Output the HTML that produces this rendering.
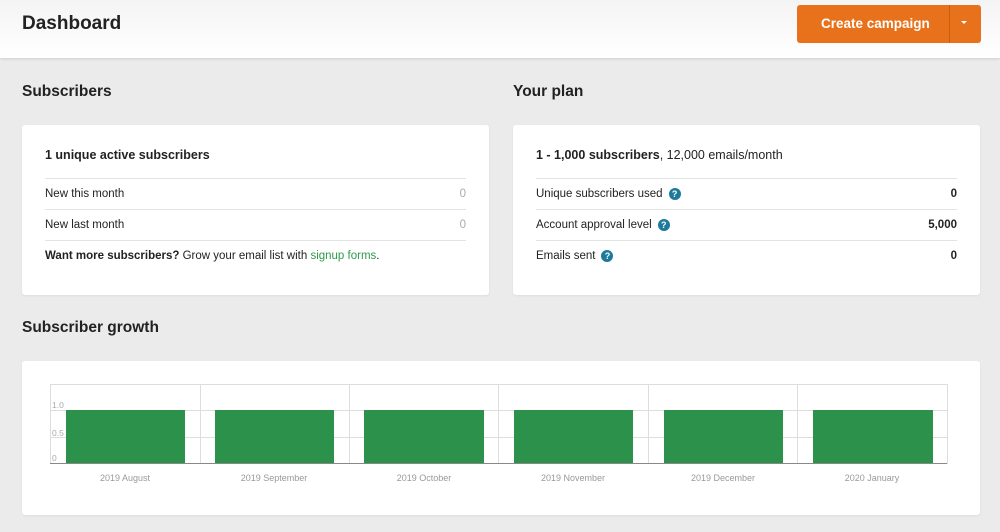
<!DOCTYPE html>
<html><head><meta charset="utf-8"><style>
*{margin:0;padding:0;box-sizing:border-box}
body{width:1000px;height:532px;background:#ebebeb;font-family:"Liberation Sans",sans-serif;color:#222;position:relative;overflow:hidden}
.hdr{position:absolute;left:0;top:0;width:1000px;height:58px;background:linear-gradient(#f4f4f4,#fff);box-shadow:0 1px 3px rgba(0,0,0,.12)}
.abs{position:absolute}
h1{position:absolute;left:22px;top:13px;font-size:19px;font-weight:bold;color:#222}
.btn{position:absolute;left:797px;top:5px;width:184px;height:38px;background:#e8721c;border-radius:3px;color:#fff;font-weight:bold;font-size:13.5px}
.btn span{position:absolute;left:24px;top:11px}
.btn i{position:absolute;left:152px;top:0;width:1px;height:38px;background:#c95e10}
.btn b{position:absolute;left:164px;top:16px;border:3px solid transparent;border-top-color:#fff}
h2{position:absolute;font-size:15.5px;font-weight:bold}
.card{position:absolute;background:#fff;border-radius:3px;box-shadow:0 1px 2px rgba(0,0,0,.06)}
.row{position:absolute;left:23px;right:23px;height:31px;border-top:1px solid #e3e3e3;font-size:11.5px;line-height:31px}
.row .v{position:absolute;right:0;top:0}
.q{display:inline-block;width:12px;height:12px;border-radius:50%;background:#1e7a9a;color:#fff;font-size:9px;font-weight:bold;line-height:12px;text-align:center;margin-left:6px;vertical-align:0px}
</style></head><body>
<div class="hdr"></div>
<h1>Dashboard</h1>
<div class="btn"><span>Create campaign</span><i></i><b></b></div>
<h2 style="left:22px;top:83px">Subscribers</h2>
<h2 style="left:513px;top:83px">Your plan</h2>
<div class="card" style="left:22px;top:125px;width:467px;height:170px">
<div class="abs" style="left:23px;top:23px;font-size:12.5px;font-weight:bold">1 unique active subscribers</div>
<div class="row" style="top:53px">New this month<span class="v" style="color:#aaa">0</span></div>
<div class="row" style="top:84px">New last month<span class="v" style="color:#aaa">0</span></div>
<div class="row" style="top:115px"><b>Want more subscribers?</b> Grow your email list with <span style="color:#2e9a4a">signup forms</span>.</div>
</div>
<div class="card" style="left:513px;top:125px;width:467px;height:170px">
<div class="abs" style="left:23px;top:23px;font-size:12.5px"><b>1 - 1,000 subscribers</b>, 12,000 emails/month</div>
<div class="row" style="top:53px">Unique subscribers used<span class="q">?</span><span class="v"><b>0</b></span></div>
<div class="row" style="top:84px">Account approval level<span class="q">?</span><span class="v"><b>5,000</b></span></div>
<div class="row" style="top:115px">Emails sent<span class="q">?</span><span class="v"><b>0</b></span></div>
</div>
<h2 style="left:22px;top:319px">Subscriber growth</h2>
<div class="card" style="left:22px;top:361px;width:958px;height:154px"></div>
<svg class="abs" style="left:0;top:0" width="1000" height="532" font-family="Liberation Sans,sans-serif">
<rect x="50.5" y="384.5" width="897" height="79" fill="none" stroke="#ddd"/>
<g stroke="#ddd"><line x1="200.5" y1="384" x2="200.5" y2="463"/><line x1="349.5" y1="384" x2="349.5" y2="463"/><line x1="498.5" y1="384" x2="498.5" y2="463"/><line x1="648.5" y1="384" x2="648.5" y2="463"/><line x1="797.5" y1="384" x2="797.5" y2="463"/>
<line x1="50" y1="410.5" x2="947" y2="410.5"/><line x1="50" y1="437.5" x2="947" y2="437.5"/></g>
<g fill="#2c914a"><rect x="66" y="410" width="119" height="53"/><rect x="215" y="410" width="119" height="53"/><rect x="364" y="410" width="120" height="53"/><rect x="514" y="410" width="119" height="53"/><rect x="664" y="410" width="119" height="53"/><rect x="813" y="410" width="120" height="53"/></g>
<line x1="50" y1="463.5" x2="947" y2="463.5" stroke="#888"/>
<g font-size="8.5" fill="#aaa"><text x="52" y="408">1.0</text><text x="52" y="436">0.5</text><text x="52" y="461">0</text></g>
<g font-size="9" fill="#999" text-anchor="middle"><text x="125" y="481">2019 August</text><text x="274" y="481">2019 September</text><text x="424" y="481">2019 October</text><text x="573" y="481">2019 November</text><text x="723" y="481">2019 December</text><text x="872" y="481">2020 January</text></g>
</svg>
</body></html>
